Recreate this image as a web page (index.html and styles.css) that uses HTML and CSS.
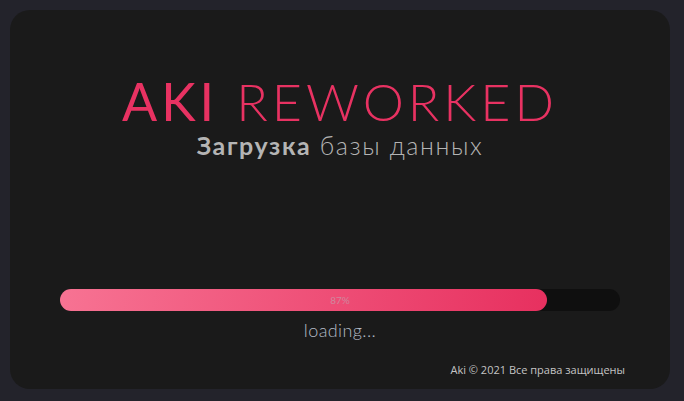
FILE: index.html
```html
<!DOCTYPE html>
<html lang="ru">
<head>
<meta charset="utf-8">
<link rel="stylesheet" href="styles.css">
</head>
<body>
<div class="card">
  <div class="head">
    <h1 class="title"><span class="bold">AKI</span> REWORKED</h1>
    <p class="subtitle"><span class="bold">Загрузка</span> базы данных</p>
  </div>
  <div class="progress">
    <div class="bar">
      <div class="fill" style="width:87%"></div>
      <span class="pct">87%</span>
    </div>
    <div class="loading">loading...</div>
  </div>
  <div class="footer">Aki © 2021 Все права защищены</div>
</div>
</body>
</html>
```
FILE: styles.css
```css
html, body {
  margin: 0;
  background: #23232b;
}
body {
  padding: 10px;
  width: 684px;
  height: 401px;
  box-sizing: border-box;
}
.card {
  background: #1a1a1a;
  border-radius: 20px;
  height: 379px;
  width: 660px;
  box-sizing: border-box;
  padding: 0 50px;
  display: flex;
  flex-direction: column;
}
.head {
  text-align: center;
  padding-top: 61px;
}
.title {
  margin: 0;
  font-family: "Lato", sans-serif;
  font-weight: 300;
  font-size: 52px;
  line-height: 60px;
  color: #e83262;
  letter-spacing: 4px;
}
.title .bold { font-weight: 400; }
.subtitle .bold { font-weight: 700; }
.subtitle {
  margin: 0;
  font-family: "Lato", sans-serif;
  font-weight: 300;
  font-size: 25px;
  line-height: 28px;
  color: #b4b4b4;
  letter-spacing: 1.6px;
}
.progress {
  margin-top: 130px;
}
.bar {
  position: relative;
  height: 22px;
  border-radius: 11px;
  background: #0f0f0f;
}
.fill {
  height: 100%;
  border-radius: 11px;
  background: linear-gradient(100deg, #f77393, #e7305f);
}
.pct {
  position: absolute;
  left: 0; right: 0; top: 0;
  text-align: center;
  line-height: 22px;
  font-family: "Lato", sans-serif;
  font-size: 10px;
  color: #d0879d;
}
.loading {
  text-align: center;
  margin-top: 8px;
  font-family: "Lato", sans-serif;
  font-weight: 300;
  font-size: 18px;
  line-height: 22px;
  color: #b3bac6;
  letter-spacing: 0.4px;
}
.footer {
  margin-top: auto;
  margin-bottom: 12px;
  margin-right: -5px;
  text-align: right;
  font-family: "Open Sans", sans-serif;
  font-size: 11px;
  color: #c4c4c4;
}
```
